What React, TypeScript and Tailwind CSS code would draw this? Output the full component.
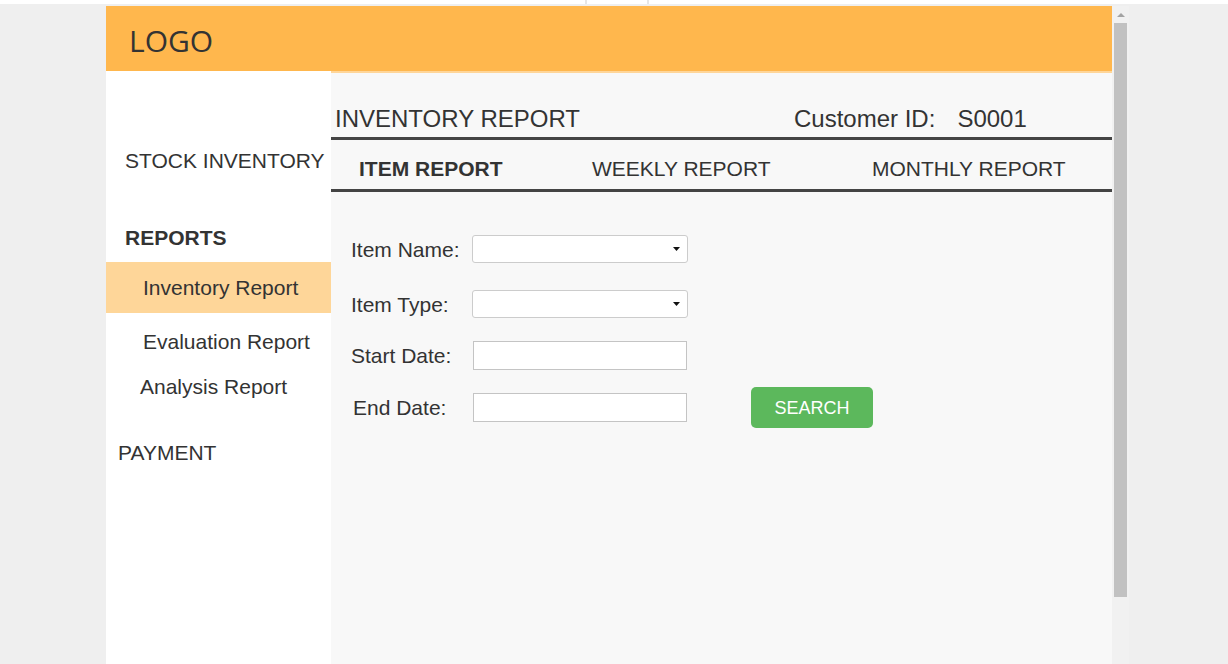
import React from 'react';

const SelectBox = () => (
  <div className="relative w-[216px] h-[28px]">
    <select className="appearance-none w-full h-full bg-white border border-[#cccccc] rounded-[3px] outline-none" />
    <svg className="absolute right-[8px] top-[12px]" width="7" height="4" viewBox="0 0 7 4">
      <path d="M0 0h7L3.5 4z" fill="#111" />
    </svg>
  </div>
);

const TextBox = () => (
  <input type="text" className="w-[214px] h-[29px] bg-white border border-[#c4c4c4] outline-none" />
);

// classic scrollbar of the framed page
const ScrollBar = () => (
  <div className="w-[17px] shrink-0 bg-[#f1f1f1] flex flex-col items-center">
    <div className="h-[17px] flex items-center justify-center">
      <svg width="8" height="4" viewBox="0 0 8 4">
        <path d="M0 4L4 0l4 4z" fill="#a3a3a3" />
      </svg>
    </div>
    <div className="w-[13px] h-[574px] bg-[#c1c1c1]" />
  </div>
);

const App = () => {
  return (
    <div className="h-screen overflow-hidden bg-[#efefef] text-[#333] font-['Liberation_Sans',Arial,sans-serif]">
      {/* browser strip */}
      <div className="h-[4px] bg-white flex">
        <div className="w-[585px]" />
        <div className="w-[2px] bg-[#e6e6e6]" />
        <div className="w-[60px]" />
        <div className="w-[2px] bg-[#e6e6e6]" />
      </div>

      <div className="ml-[106px] mt-[2px] w-[1023px] h-[720px] flex">
        <div className="w-[1006px] flex flex-col">
          <header className="h-[65px] shrink-0 bg-[#ffb74d] pl-[23px] pt-[15px]">
            <span className="font-['Open_Sans',sans-serif] text-[30px] leading-[40px] text-[#333]">LOGO</span>
          </header>

          <div className="flex flex-1">
            {/* sidebar */}
            <nav className="w-[225px] shrink-0 bg-white text-[21px]">
              <div className="mt-[78px] pl-[19px] leading-[24px]">STOCK INVENTORY</div>
              <div className="mt-[53px] pl-[19px] leading-[24px] font-bold">REPORTS</div>
              <div className="mt-[12px] h-[51px] flex items-center pl-[37px] bg-[#fed699]">Inventory Report</div>
              <div className="mt-[17px] pl-[37px] leading-[24px]">Evaluation Report</div>
              <div className="mt-[21px] pl-[34px] leading-[24px]">Analysis Report</div>
              <div className="mt-[42px] pl-[12px] leading-[24px]">PAYMENT</div>
            </nav>

            {/* main */}
            <main className="flex-1 bg-[#f8f8f8] border-t-2 border-[#ffd699]">
              <div className="pt-[34px] pb-[6px] border-b-[3px] border-[#444] flex items-center pl-[4px] text-[24px] leading-[24px]">
                <span className="w-[459px]">INVENTORY REPORT</span>
                <span>Customer ID:</span>
                <span className="ml-[22px]">S0001</span>
              </div>

              <div className="pt-[17px] pb-[8px] border-b-[3px] border-[#444] flex items-center pl-[28px] text-[21px] leading-[24px]">
                <span className="w-[233px] font-bold">ITEM REPORT</span>
                <span className="w-[280px]">WEEKLY REPORT</span>
                <span>MONTHLY REPORT</span>
              </div>

              <div className="pl-[20px] pt-[43px] text-[21px] leading-[24px]">
                <div className="flex items-center">
                  <label className="w-[121px] pt-[2px]">Item Name:</label>
                  <SelectBox />
                </div>
                <div className="flex items-center mt-[27px]">
                  <label className="w-[121px] pt-[1px]">Item Type:</label>
                  <SelectBox />
                </div>
                <div className="flex items-center mt-[23px]">
                  <label className="w-[122px]">Start Date:</label>
                  <TextBox />
                </div>
                <div className="flex items-center mt-[17px]">
                  <label className="w-[122px] pl-[2px]">End Date:</label>
                  <TextBox />
                  <button className="ml-[64px] w-[122px] h-[41px] bg-[#5cb85c] rounded-[5px] text-white text-[18px]">
                    SEARCH
                  </button>
                </div>
              </div>
            </main>
          </div>
        </div>
        <ScrollBar />
      </div>
    </div>
  );
};

export default App;
